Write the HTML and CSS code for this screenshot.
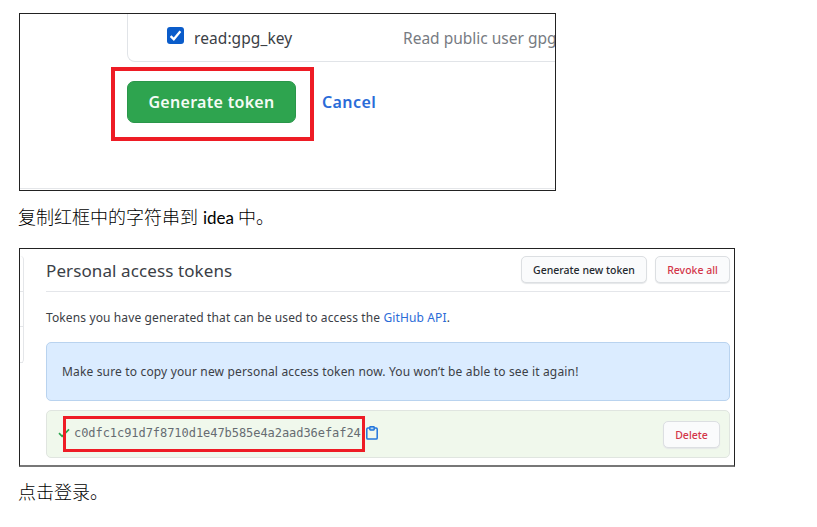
FILE: index.html
```html
<!DOCTYPE html>
<html lang="zh-CN">
<head>
<meta charset="utf-8">
<title>Personal access tokens</title>
<link rel="stylesheet" href="styles.css">
</head>
<body>
<main class="doc">
  <figure class="frame frame-generate">
    <div class="scope">
      <span class="checkbox"><svg viewBox="0 0 17 17"><path d="M3.6 9.1 6.8 12.2 13.4 4.2" fill="none" stroke="#fff" stroke-width="2.3"/></svg></span>
      <span class="scope-name">read:gpg_key</span>
      <span class="scope-desc">Read public user gpg</span>
    </div>
    <div class="actions">
      <div class="primary">Generate token<span class="mark mark-button"></span></div>
      <a class="cancel">Cancel</a>
    </div>
    <div class="rule"></div>
  </figure>
  <p class="note note-copy">复制红框中的字符串到 <span class="latin">idea</span> 中。</p>
  <figure class="frame frame-tokens">
    <div class="side"><i></i><i></i><i></i></div>
    <section class="panel">
      <header class="head">
        <h1>Personal access tokens</h1>
        <div class="btn btn-new"><span>Generate new token</span></div>
        <div class="btn btn-revoke danger"><span>Revoke all</span></div>
      </header>
      <p class="intro">Tokens you have generated that can be used to access the <a>GitHub API</a>.</p>
      <div class="flash"><span>Make sure to copy your new personal access token now. You won’t be able to see it again!</span></div>
      <div class="token">
        <svg class="check" viewBox="0 0 12 10"><path d="M1 5.2 4.1 8.3 11 1.3" fill="none" stroke="#2da44e" stroke-width="1.7"/></svg>
        <code>c0dfc1c91d7f8710d1e47b585e4a2aad36efaf24</code>
        <svg class="clip" viewBox="0 0 12 14"><path d="M3.6 2H1.9Q.8 2 .8 3.1V12q0 1.1 1.1 1.1h8.2q1.1 0 1.1-1.1V3.1Q11.2 2 10.1 2H8.4" fill="none" stroke="#2275dc" stroke-width="1.5"/><rect x="3.8" y=".8" width="4.4" height="3.1" rx=".6" fill="#b9d8ee" stroke="#2275dc" stroke-width="1.5"/></svg>
        <div class="btn btn-delete danger"><span>Delete</span></div>
        <span class="mark mark-token"></span>
      </div>
    </section>
  </figure>
  <p class="note note-login">点击登录。</p>
</main>
</body>
</html>
```
FILE: styles.css
```css
* { box-sizing: border-box; }
body {
  margin: 0;
  background: #fff;
  color: #3b4046;
  font-family: "Noto Sans", "Open Sans", sans-serif;
}
.doc { padding: 13px 0 0 19px; }
.frame {
  margin: 0;
  border: 1px solid #222;
  background: #fff;
  overflow: hidden;
}
a { color: #2a6bd8; text-decoration: none; }
.mark { position: absolute; border: 3px solid #ee1c25; }

.frame-generate {
  width: 537px;
  height: 178px;
  display: flex;
  flex-direction: column;
}
.scope {
  display: flex;
  align-items: center;
  width: 520px;
  height: 48px;
  margin-left: 107px;
  padding-left: 39px;
  border: solid #e1e4e8;
  border-width: 0 0 1px 1px;
  border-radius: 0 0 0 8px;
  white-space: nowrap;
  font-size: 15.5px;
}
.checkbox { width: 17px; height: 17px; margin-top: -5px; border-radius: 3px; background: #0a5cca; }
.checkbox svg { display: block; width: 17px; height: 17px; }
.scope-name { width: 209px; margin-left: 10px; letter-spacing: 0.08px; }
.scope-desc { color: #777b82; }
.actions { display: flex; margin: 19px 0 0 107px; }
.primary {
  position: relative;
  width: 169px;
  height: 42px;
  border: 1px solid #2a964a;
  border-radius: 7px;
  background: #2ea44f;
  color: #f4fbf5;
  font-size: 16px;
  font-weight: 600;
  letter-spacing: 0.3px;
  line-height: 41px;
  text-align: center;
  white-space: nowrap;
}
.mark-button { left: -17px; top: -15px; width: 203px; height: 74px; border-width: 4px; }
.cancel { margin-left: 26px; font-size: 16px; font-weight: 600; letter-spacing: 0.4px; line-height: 42px; }
.rule { height: 1px; margin-top: auto; margin-bottom: 1px; background: #e4e6e9; }

.note {
  margin: 0;
  color: #000;
  font-family: "Noto Sans CJK SC", sans-serif;
  font-size: 18px;
  font-weight: 300;
  line-height: 24px;
}
.latin { margin-left: 1px; font-family: Lato, sans-serif; font-size: 17px; font-weight: 400; }
.note-copy { margin: 13px 0 18px -1px; }
.note-login { margin: 12px 0 0 -1px; }

.frame-tokens {
  display: flex;
  width: 716px;
  height: 219px;
  border-bottom: 2px solid #777;
}
.side { display: flex; flex-direction: column; width: 4px; height: 107px; margin-top: 7px; border-right: 1px solid #e4e6e9; border-radius: 0 6px 6px 0; }
.side i { flex: 1; border-bottom: 1px solid #e4e6e9; }
.panel { width: 684px; margin-left: 22px; }
.head { display: flex; align-items: flex-start; height: 43px; padding-top: 7px; border-bottom: 1px solid #e4e6ea; }
h1 { flex: 1; margin: 3px 0 0; font-size: 17px; font-weight: 400; letter-spacing: 0.1px; line-height: 24px; }
.btn {
  height: 27px;
  border: 1px solid #dcdfe2;
  border-radius: 5px;
  background: #fafbfc;
  box-shadow: 0 1px 1px #e5e7e9;
  color: #24292e;
  font-size: 10.5px;
  font-weight: 500;
  line-height: 26px;
  text-align: center;
  white-space: nowrap;
}
.danger { color: #d3364a; }
.btn-new { width: 126px; }
.btn-revoke { width: 75px; margin-left: 8px; }
.intro { margin: 16px 0 15px; font-size: 12px; letter-spacing: 0.12px; line-height: 19px; white-space: nowrap; }
.flash {
  height: 59px;
  padding-left: 15px;
  border: 1px solid #b9d3ef;
  border-radius: 5px;
  background: #dbecff;
  font-size: 12px;
  letter-spacing: 0.16px;
  line-height: 58px;
  white-space: nowrap;
}
.token {
  position: relative;
  display: flex;
  align-items: center;
  height: 48px;
  margin-top: 9px;
  padding: 0 9px 0 11px;
  border: 1px solid #e0e5e0;
  border-radius: 5px;
  background: #f0f8ec;
}
.check { width: 12px; height: 10px; margin-top: -2px; }
code { margin: -2px 0 0 4px; color: #666c72; font: 12px/18px "DejaVu Sans Mono", monospace; letter-spacing: -0.055px; }
.clip { width: 12px; height: 14px; margin: -3px 0 0 5px; }
.btn-delete { width: 57px; margin-left: auto; }
.mark-token { left: 16px; top: 5px; width: 302px; height: 36px; }
```
